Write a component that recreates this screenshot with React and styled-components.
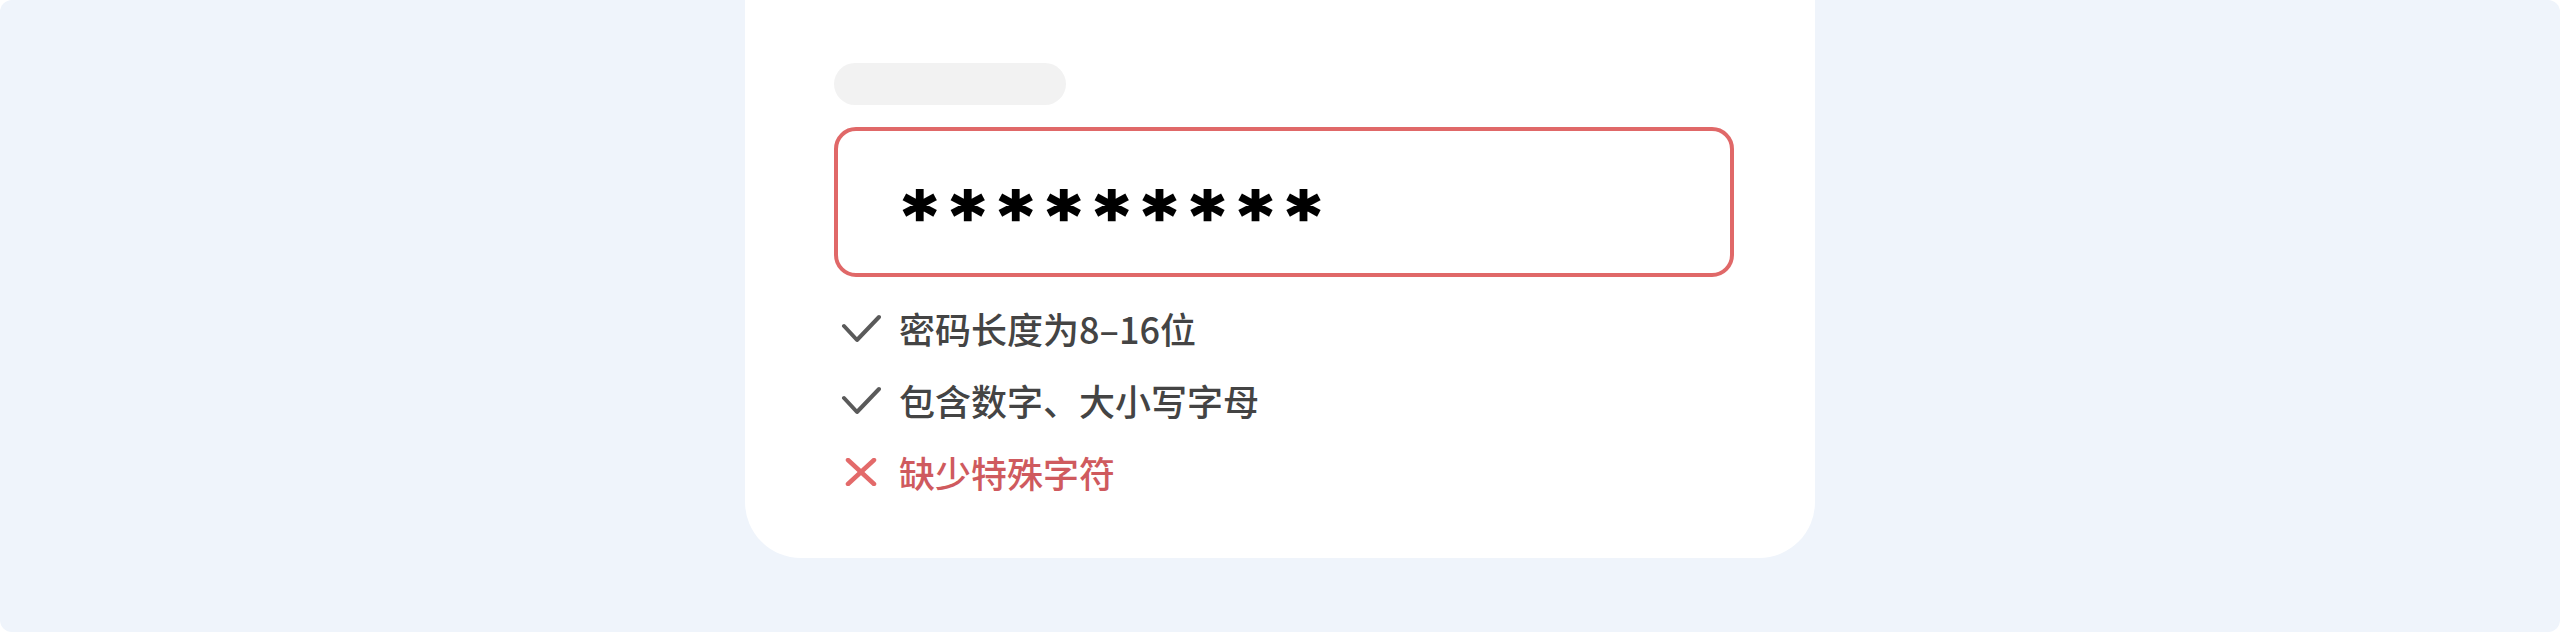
import React from "react";
import styled, { createGlobalStyle } from "styled-components";

const GlobalStyle = createGlobalStyle`
  html, body {
    margin: 0;
    padding: 0;
    background: #ffffff;
  }
  body {
    font-family: "Noto Sans CJK SC", "Noto Sans", sans-serif;
  }
`;

const Stage = styled.div`
  width: 2560px;
  height: 632px;
  box-sizing: border-box;
  background: #eff4fb;
  border-radius: 12px;
  display: flex;
  justify-content: center;
  align-items: flex-start;
  overflow: hidden;
`;

const Card = styled.div`
  width: 1070px;
  height: 558px;
  box-sizing: border-box;
  background: #ffffff;
  border-radius: 0 0 56px 56px;
  padding: 63px 81px 0 89px;
  display: flex;
  flex-direction: column;
`;

const LabelSkeleton = styled.div`
  width: 232px;
  height: 42px;
  border-radius: 21px;
  background: #f2f2f2;
`;

const PasswordBox = styled.div`
  margin-top: 22px;
  height: 150px;
  box-sizing: border-box;
  border: 4px solid ${(p) => (p.$invalid ? "#e06868" : "#d9d9d9")};
  border-radius: 22px;
  display: flex;
  align-items: center;
  padding-left: 65px;
`;

const Masked = styled.span`
  font-family: "DejaVu Sans", sans-serif;
  font-weight: 700;
  font-size: 64px;
  line-height: 1;
  letter-spacing: 14.5px;
  color: #000000;
  -webkit-text-stroke: 2.5px #000000;
  transform: translateY(14px);
`;

const RuleList = styled.ul`
  list-style: none;
  margin: 15px 0 0;
  padding: 0;
  display: flex;
  flex-direction: column;
`;

const Rule = styled.li`
  height: 72px;
  display: flex;
  align-items: center;
  gap: 14px;
  font-size: 36px;
  font-weight: 500;
  color: ${(p) => (p.$ok ? "#444444" : "#cf5a5e")};
`;

const IconSlot = styled.span`
  width: 48px;
  margin-left: 3px;
  display: flex;
  justify-content: center;
  align-items: center;
`;

const CheckIcon = () => (
  <svg width="40" height="30" viewBox="0 0 40 30" fill="none">
    <polyline
      points="3,13 16,27 38,4"
      stroke="#5a5a5a"
      strokeWidth="4"
      strokeLinecap="round"
      strokeLinejoin="round"
    />
  </svg>
);

const CrossIcon = () => (
  <svg width="32" height="28" viewBox="0 0 32 28" fill="none">
    <g stroke="#e36a6a" strokeWidth="4.5" strokeLinecap="round">
      <line x1="3" y1="2" x2="29" y2="26" />
      <line x1="29" y1="2" x2="3" y2="26" />
    </g>
  </svg>
);

const rules = [
  { text: "密码长度为8–16位", ok: true },
  { text: "包含数字、大小写字母", ok: true },
  { text: "缺少特殊字符", ok: false },
];

export default function App() {
  return (
    <>
      <GlobalStyle />
      <Stage>
        <Card>
          <LabelSkeleton />
          <PasswordBox $invalid>
            <Masked>*********</Masked>
          </PasswordBox>
          <RuleList>
            {rules.map((r) => (
              <Rule key={r.text} $ok={r.ok}>
                <IconSlot>{r.ok ? <CheckIcon /> : <CrossIcon />}</IconSlot>
                {r.text}
              </Rule>
            ))}
          </RuleList>
        </Card>
      </Stage>
    </>
  );
}
